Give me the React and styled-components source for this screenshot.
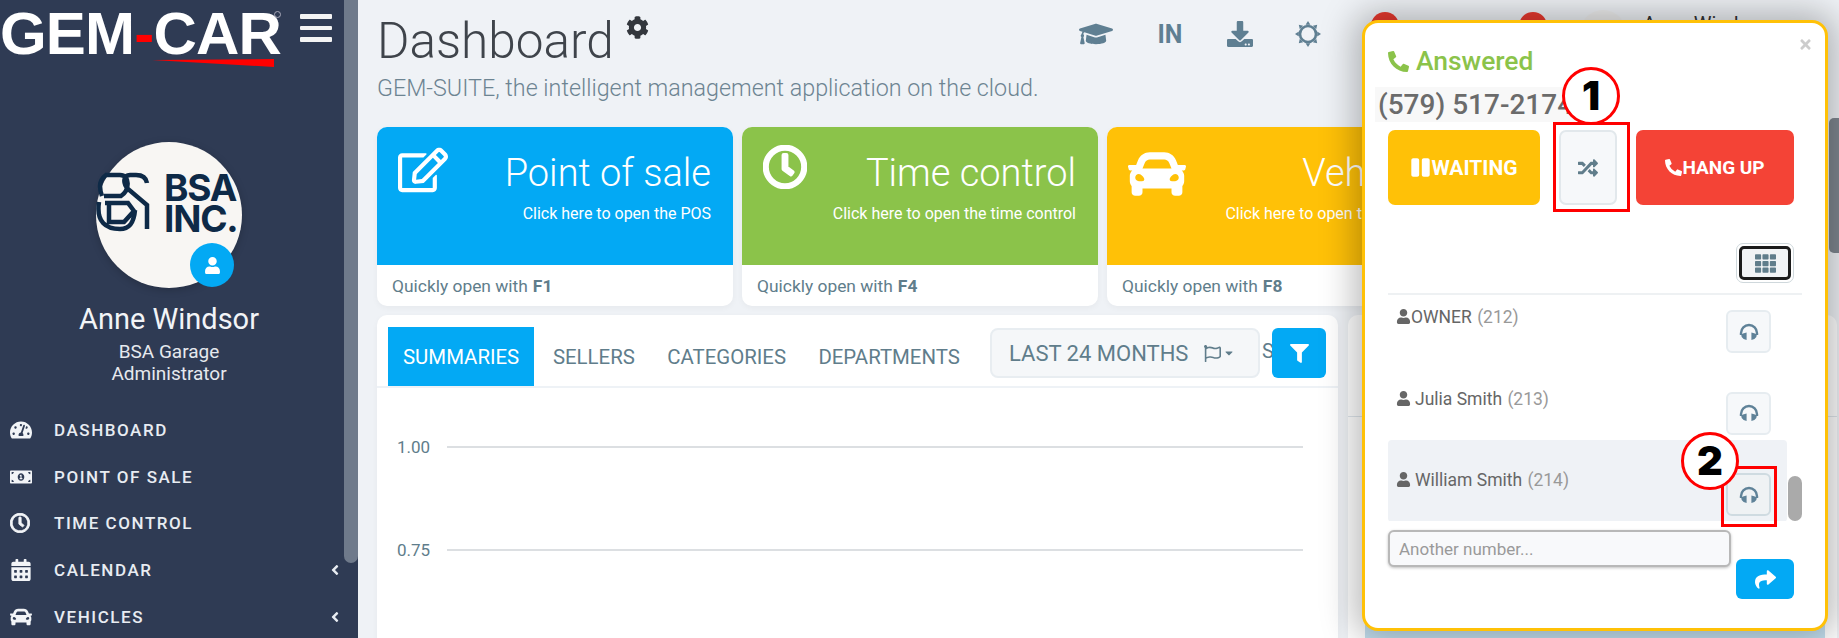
import React from "react";
import styled, { createGlobalStyle } from "styled-components";
import {
  FaTachometerAlt, FaMoneyBillAlt, FaRegClock, FaCalendarAlt, FaCar, FaUser, FaAngleLeft, FaCog,
  FaRegEdit, FaGraduationCap, FaDownload, FaRandom, FaTh, FaShare,
  FaFilter, FaPhoneAlt, FaPause, FaTimes, FaRegFlag, FaCaretDown,
} from "react-icons/fa";

const Global = createGlobalStyle`
  html, body { margin: 0; padding: 0; height: 638px; overflow: hidden; background: #eff2f6; }
  body, input { font-family: Roboto, "Liberation Sans", sans-serif; }
  * { box-sizing: border-box; }
`;

const Page = styled.div`
  position: relative; width: 1839px; height: 638px; overflow: hidden;
  display: flex; background: #eff2f6;
`;

/* Sidebar */
const Sidebar = styled.aside`
  position: relative; width: 358px; height: 638px; flex: none; background: #2f3b54; color: #fff;
  display: flex; flex-direction: column;
`;
const SideThumb = styled.div`
  position: absolute; top: 0; right: 0; width: 14px; height: 563px; background: #6f7a8b;
  border-radius: 0 0 7px 7px;
`;
const Brand = styled.div`
  display: flex; height: 142px; flex: none; align-items: flex-start;
`;
const Logo = styled.div`
  position: relative; width: 300px; height: 70px; padding-top: 3px;
  font: 700 60px/62px "Liberation Sans", Arial, sans-serif; letter-spacing: -.8px; white-space: nowrap;
  color: #fff;
`;
const RedDash = styled.span`color: #f00;`;
const Swoosh = styled.svg`position: absolute; left: 150px; top: 59px;`;
const Reg = styled.span`
  position: absolute; left: 274px; top: 11px; width: 7px; height: 7px; border-radius: 50%; border: 1px solid #aab;
`;
const Burger = styled.div`
  margin: 14px 0 0 0; width: 32px; display: flex; flex-direction: column; gap: 7px;
  & > i { display: block; height: 4.5px; background: #f4f4f4; border-radius: 1px; }
`;
const Profile = styled.div`
  display: flex; flex-direction: column; align-items: center; width: 338px; flex: none;
`;
const Avatar = styled.div`
  position: relative; width: 146px; height: 146px; border-radius: 50%; background: #f8f6f3;
  box-shadow: 0 2px 8px rgba(0,0,0,.2);
`;
const AvatarMark = styled.svg`position: absolute; left: 0; top: 30px;`;
const AvatarText = styled.div`
  position: absolute; left: 68px; top: 30px; color: #0e2a47; font: 700 37px/31px Inter, Roboto, sans-serif; letter-spacing: -1.2px;
`;
const Badge = styled.div`
  position: absolute; left: 94px; top: 101px; width: 44px; height: 44px; border-radius: 50%;
  background: #03a9f4; display: flex; align-items: center; justify-content: center; font-size: 17px; color: #fff;
`;
const Name = styled.div`font-size: 29px; line-height: 32px; margin-top: 15px; color: #f2f4f7;`;
const Role = styled.div`font-size: 19px; line-height: 22px; color: #e6e9ee; margin-top: ${p => p.$mt || 0}px;`;
const Menu = styled.nav`
  margin-top: 22px; display: flex; flex-direction: column;
`;
const MenuItem = styled.div`
  display: flex; align-items: center; height: 46.6px; flex: none; padding-left: 10px;
  color: #e8ecf2; font-size: 17px; font-weight: 500; letter-spacing: 1.55px;
`;
const MenuIcon = styled.span`
  width: 44px; flex: none; display: flex; align-items: center; font-size: 22px; color: #f2f4f7;
`;
const MenuLabel = styled.span`flex: 1;`;
const MenuCaret = styled.span`
  width: 30px; margin-right: 8px; font-size: 16px; display: flex; justify-content: center; color: #e8ecf2;
`;

/* Main */
const Main = styled.main`flex: 1; min-width: 0; padding: 0 0 0 19px; display: flex; flex-direction: column;`;
const Header = styled.header`display: flex; height: 127px; flex: none; align-items: flex-start;`;
const Titles = styled.div`width: 682px; padding-top: 13px;`;
const Title = styled.h1`
  margin: 0; display: flex; align-items: flex-start; font-weight: 300; font-size: 49.5px; line-height: 56px; color: #3f444b;
`;
const TitleGear = styled.span`font-size: 23px; margin: 3px 0 0 12px; line-height: 1; color: #33373d;`;
const Sub = styled.p`margin: 5px 0 0; font-size: 23.3px; line-height: 28px; font-weight: 300; color: #6d8492; white-space: nowrap;`;
const TopIcons = styled.div`
  display: flex; align-items: center; height: 68px; color: #5f7f92;
`;
const TopIcon = styled.span`
  width: ${p => p.$w}px; display: flex; justify-content: center; font-size: ${p => p.$s || 26}px; font-weight: 700;
`;
const Cards = styled.div`display: flex; gap: 9px; width: 1460px; flex: none;`;
const Card = styled.article`
  width: 356px; flex: none; height: 179px; border-radius: 10px; overflow: hidden; background: #fff;
  box-shadow: 0 2px 6px rgba(0,0,0,.04);
`;
const CardTop = styled.div`
  height: 138px; background: ${p => p.$c}; color: #fff; display: flex; justify-content: space-between; padding: 18px 22px 0 21px;
`;
const CardIcon = styled.div`font-size: ${p => p.$s || 46}px; line-height: 1; width: 60px; height: 46px;`;
const CardText = styled.div`text-align: right; white-space: nowrap;`;
const CardTitle = styled.div`font-size: 38px; font-weight: 300; line-height: 44px; margin-top: 6px;`;
const CardDesc = styled.div`font-size: 16px; line-height: 20px; margin-top: 9px; font-weight: 400;`;
const CardFoot = styled.div`height: 41px; padding: 0 15px; display: flex; align-items: center; font-size: 17.4px; color: #607d8b; & b{margin-left:5px}`;
const ThickClock = styled(FaRegClock)`stroke: currentColor; stroke-width: 24px;`;

const Panels = styled.div`display: flex; gap: 10px; margin-top: 9px; width: 1460px; flex: none;`;
const Panel = styled.section`
  width: 961px; height: 400px; flex: none; background: #fff; border-radius: 10px 10px 0 0; box-shadow: 0 2px 6px rgba(0,0,0,.04); position: relative;
`;
const SidePanel = styled.section`flex: 1; height: 400px; background: #fff; border-radius: 10px 10px 0 0; & > div { height: 102px; border-bottom: 1px solid #dfe6ec; }`;
const TabBar = styled.div`
  position: relative; height: 73px; padding: 12px 11px 0; border-bottom: 2px solid #eef2f6; display: flex; align-items: stretch;
`;
const Tab = styled.div`
  padding: 0 ${p => (p.$active ? 15 : 16.2)}px; display: flex; align-items: center; font-size: 20.4px; margin-right: ${p => p.$gap || 0}px;
  color: ${p => (p.$active ? "#fff" : "#607d8b")}; background: ${p => (p.$active ? "#03a9f4" : "transparent")};
`;
const Period = styled.div`
  position: absolute; left: 613px; top: 13px; width: 270px; height: 50px; background: #f5f7f9; border: 2px solid #e8edf1; border-radius: 8px;
  display: flex; align-items: center; padding: 0 17px; font-size: 22px; color: #607d8b; white-space: nowrap;
`;
const PeriodIcons = styled.span`margin-left: 16px; display: flex; align-items: center; font-size: 17px; color: #607d8b; & svg + svg { font-size: 12px; margin-left: 2px; }`;
const Cut = styled.span`position: absolute; left: 885px; top: 24px; color: #607d8b; font-size: 20px;`;
const FilterBtn = styled.div`
  position: absolute; left: 895px; top: 13px; width: 54px; height: 50px; border-radius: 6px; background: #03a9f4; color: #fff;
  display: flex; align-items: center; justify-content: center; font-size: 19px;
`;
const Chart = styled.div`padding: 49px 35px 0 20px; display: flex; flex-direction: column; gap: 83px;`;
const ChartRow = styled.div`display: flex; align-items: center; gap: 17px; font-size: 17px; color: #607d8b; & > i { flex: 1; height: 2px; background: #dcdfe2; }`;

const PageThumb = styled.div`position: absolute; right: 0; top: 118px; width: 10px; height: 135px; background: #7f8790; border-radius: 5px 0 0 5px;`;
const BehindTop = styled.div`
  position: absolute; left: 1370px; top: 12px; width: 460px; height: 10px;
`;
const RedDot = styled.i`position: absolute; top: 0; left: ${p => p.$x}px; width: 28px; height: 28px; border-radius: 50%; background: #e8392f;`;
const GreyDot = styled.i`position: absolute; top: -2px; left: 210px; width: 46px; height: 46px; border-radius: 50%; background: #eee;`;
const BehindName = styled.span`position: absolute; left: 273px; top: 0; font-size: 20px; color: #333; white-space: nowrap;`;
const BehindChart = styled.div`position: absolute; left: 1365px; top: 622px; width: 460px; height: 16px; background: #c4e0f0;`;

/* Call popup */
const Popup = styled.div`
  position: absolute; left: 1362px; top: 20px; width: 466px; height: 611px; background: #fff; border: 3px solid #ffc107; border-radius: 16px;
  box-shadow: 0 0 34px 8px rgba(0,0,0,.27); padding: 0 23px; display: flex; flex-direction: column;
`;
const Close = styled.span`position: absolute; right: 12px; top: 14px; color: #ccc; font-size: 15px;`;
const Status = styled.div`
  margin-top: 23px; height: 30px; flex: none; display: flex; align-items: center; gap: 7px; color: #8bc34a; font-size: 26.4px; font-weight: 500;
  & svg { font-size: 21px; }
`;
const Phone = styled.div`
  margin: 11px 0 0 -13px; height: 35px; flex: none; width: 200px; white-space: nowrap; font-size: 28px; font-weight: 500; line-height: 35px; color: #6b6b6b; background: #f8f8f8; padding-left: 3px;
`;
const Actions = styled.div`display: flex; gap: 19px; margin-top: 8px; flex: none;`;
const ActionBtn = styled.div`
  width: ${p => p.$w}px; height: 75px; border-radius: 7px; flex: none; display: flex; align-items: center; justify-content: center;
  background: ${p => p.$bg}; color: ${p => p.$fg || "#fff"}; border: ${p => p.$line ? `2px solid ${p.$line}` : 0}; font-size: ${p => p.$f || 19}px; font-weight: 700; white-space: nowrap;
  & svg { font-size: ${p => p.$i || 21}px; }
`;
const Keypad = styled.div`
  margin: 38px 8px 0 auto; width: 58px; height: 40px; flex: none; border: 1px solid #cfd8dc; border-radius: 7px; padding: 2px;
  & > div { height: 100%; border: 3px solid #1b1b1b; border-radius: 5px; background: #f1f3f5; display: flex; align-items: center; justify-content: center; color: #607d8b; font-size: 21px; }
`;
const Extensions = styled.div`
  position: relative; flex: none; height: 228px; margin: 10px 0 0; border-top: 2px solid #eef1f3; overflow: hidden;
`;
const ExtensionScroll = styled.div`display: flex; flex-direction: column; margin-top: -18px;`;
const Extension = styled.div`
  width: 399px; height: 81.5px; flex: none; padding: 0 16px 0 8px; display: flex; justify-content: space-between; align-items: flex-start; font-size: 17.5px; color: #666; border-radius: 4px;
  background: ${p => (p.$active ? "#eff2f6" : "transparent")};
`;
const ExtName = styled.span`
  display: block; line-height: 20px; margin-top: 30px; white-space: nowrap;
  & svg { font-size: 15px; color: #666; margin-right: ${p => p.$tight ? 0 : 4}px; vertical-align: -1px; } & em { font-style: normal; color: #999; margin-left: 1px; }
`;
const Listen = styled.div`
  width: 45px; height: 43px; flex: none; margin-top: 33px; border-radius: 6px; border: 2px solid ${p => p.$on ? "#cfdbe1" : "#e6ecf0"}; background: ${p => p.$on ? "#eff2f4" : "#f6f8fa"};
  display: flex; align-items: center; justify-content: center; color: #5f8298;
`;
const ListThumb = styled.div`position: absolute; right: 0; bottom: 0; width: 14px; height: 45px; background: #aaa; border-radius: 7px;`;
const Other = styled.div`display: flex; gap: 5px; margin-top: 9px; align-items: flex-start; flex: none;`;
const Input = styled.input`
  width: 343px; height: 37px; border: 2px solid #b8b8b8; border-radius: 6px; background: #f8f9fb; padding: 0 9px; font-size: 17px; box-shadow: 0 1px 3px rgba(0,0,0,.25); outline: none;
  &::placeholder { color: #9a9a9a; opacity: 1; }
`;
const Send = styled.div`
  width: 58px; height: 40px; margin-top: 29px; background: #03a9f4; color: #fff; border-radius: 6px; display: flex; align-items: center; justify-content: center; font-size: 21px;
`;
const RedBox = styled.div`
  position: absolute; left: ${p => p.$x}px; top: ${p => p.$y}px; width: ${p => p.$w}px; height: ${p => p.$h}px; border: 3px solid #f00; pointer-events: none;
`;
const Marker = styled.div`
  position: absolute; left: ${p => p.$x}px; top: ${p => p.$y}px; width: 58px; height: 58px; border-radius: 50%; border: 3px solid #f00; background: #fff; color: #000;
  display: flex; align-items: center; justify-content: center; font: 900 40px/1 Inter, "Liberation Sans", sans-serif;
`;

const SunRing = () => (
  <svg width="26" height="26" viewBox="0 0 26 26" fill="currentColor">
    <circle cx="13" cy="13" r="8" fill="none" stroke="currentColor" strokeWidth="2.6" />
    {[0, 45, 90, 135, 180, 225, 270, 315].map((a) => (
      <path key={a} d="M10.6 3.8 L13 0 L15.4 3.8 Z" transform={`rotate(${a} 13 13)`} />
    ))}
  </svg>
);
const Headset = () => (
  <svg width="20" height="18" viewBox="0 0 20 18" fill="currentColor">
    <path d="M2 12 V10 A8 8 0 0 1 18 10 V12" fill="none" stroke="currentColor" strokeWidth="2.4" />
    <path d="M4 10.5 L7.6 9.6 V17 L4.6 16 Q2 14.5 2.2 11.5 Z M16 10.5 L12.4 9.6 V17 L15.4 16 Q18 14.5 17.8 11.5 Z" />
  </svg>
);

const cards = [
  { c: "#03a9f4", t: "Point of sale", d: "Click here to open the POS", k: "F1", i: <FaRegEdit />, s: 50 },
  { c: "#8bc34a", t: "Time control", d: "Click here to open the time control", k: "F4", i: <ThickClock />, s: 44 },
  { c: "#ffc107", t: "Vehicles", d: "Click here to open the vehicles", k: "F8", i: <FaCar />, s: 58 },
];
const menu = [
  ["DASHBOARD", <FaTachometerAlt />], ["POINT OF SALE", <FaMoneyBillAlt />], ["TIME CONTROL", <ThickClock size={20} />],
  ["CALENDAR", <FaCalendarAlt />, true], ["VEHICLES", <FaCar />, true],
];

export default function App() {
  return (
    <Page>
      <Global />
      <Sidebar>
        <SideThumb />
        <Brand>
          <Logo>
            GEM<RedDash>-</RedDash>CAR
            <Swoosh width="125" height="10" viewBox="0 0 125 10"><path d="M2 1 L124 0 L124 8 Z" fill="#f00" /></Swoosh>
            <Reg />
          </Logo>
          <Burger><i /><i /><i /></Burger>
        </Brand>
        <Profile>
          <Avatar>
            <AvatarMark width="54" height="60" viewBox="0 0 54 60" fill="none" stroke="#0e2a47" strokeWidth="4.5">
              <path d="M9 3 H24 C34 3 34 18 25 24 H8 M10 3 C3 8 3 16 6 24 M51 11 C50 5 46 3 40 3 H34 C28 3 26 10 32 17 L51 33 V57 M9 31 H32 L38 39 L28 50 H13 V31 M3 30 C0 50 10 57 24 57 C34 57 38 50 39 38" />
            </AvatarMark>
            <AvatarText>BSA<br />INC.</AvatarText>
            <Badge><FaUser /></Badge>
          </Avatar>
          <Name>Anne Windsor</Name>
          <Role $mt={6}>BSA Garage</Role>
          <Role>Administrator</Role>
        </Profile>
        <Menu>
          {menu.map(([label, icon, sub]) => (
            <MenuItem key={label}>
              <MenuIcon>{icon}</MenuIcon>
              <MenuLabel>{label}</MenuLabel>
              {sub && <MenuCaret><FaAngleLeft /></MenuCaret>}
            </MenuItem>
          ))}
        </Menu>
      </Sidebar>

      <Main>
        <Header>
          <Titles>
            <Title>Dashboard<TitleGear><FaCog /></TitleGear></Title>
            <Sub>GEM-SUITE, the intelligent management application on the cloud.</Sub>
          </Titles>
          <TopIcons>
            <TopIcon $w={74} $s={34}><FaGraduationCap /></TopIcon>
            <TopIcon $w={74} $s={25}>IN</TopIcon>
            <TopIcon $w={66} $s={26}><FaDownload /></TopIcon>
            <TopIcon $w={70}><SunRing /></TopIcon>
          </TopIcons>
        </Header>
        <Cards>
          {cards.map((x) => (
            <Card key={x.k}>
              <CardTop $c={x.c}>
                <CardIcon $s={x.s}>{x.i}</CardIcon>
                <CardText>
                  <CardTitle>{x.t}</CardTitle>
                  <CardDesc>{x.d}</CardDesc>
                </CardText>
              </CardTop>
              <CardFoot>Quickly open with <b>{x.k}</b></CardFoot>
            </Card>
          ))}
        </Cards>
        <Panels>
          <Panel>
            <TabBar>
              <Tab $active $gap={2.5}>SUMMARIES</Tab>
              <Tab>SELLERS</Tab>
              <Tab>CATEGORIES</Tab>
              <Tab>DEPARTMENTS</Tab>
              <Period>LAST 24 MONTHS<PeriodIcons><FaRegFlag /><FaCaretDown /></PeriodIcons></Period>
              <Cut>S</Cut>
              <FilterBtn><FaFilter /></FilterBtn>
            </TabBar>
            <Chart>
              <ChartRow>1.00<i /></ChartRow>
              <ChartRow>0.75<i /></ChartRow>
            </Chart>
          </Panel>
          <SidePanel><div /></SidePanel>
        </Panels>
      </Main>

      <BehindTop>
        <RedDot $x={1} /><RedDot $x={149} /><GreyDot /><BehindName>Anne Windsor</BehindName>
      </BehindTop>
      <BehindChart />
      <PageThumb />

      <Popup>
        <Close><FaTimes /></Close>
        <Status><FaPhoneAlt />Answered</Status>
        <Phone>(579) 517-2174</Phone>
        <Actions>
          <ActionBtn $w={152} $f={21} $bg="#ffc107"><FaPause />WAITING</ActionBtn>
          <ActionBtn $w={58} $bg="#f6f8fa" $fg="#607d8b" $line="#e2e8ec" $i={20}><FaRandom /></ActionBtn>
          <ActionBtn $w={158} $bg="#f44336" $i={17}><FaPhoneAlt />HANG UP</ActionBtn>
        </Actions>
        <Keypad><div><FaTh /></div></Keypad>
        <Extensions>
          <ExtensionScroll>
            <Extension>
              <ExtName $tight><FaUser />OWNER <em>(212)</em></ExtName>
              <Listen><Headset /></Listen>
            </Extension>
            <Extension>
              <ExtName><FaUser />Julia Smith <em>(213)</em></ExtName>
              <Listen><Headset /></Listen>
            </Extension>
            <Extension $active>
              <ExtName><FaUser />William Smith <em>(214)</em></ExtName>
              <Listen $on><Headset /></Listen>
            </Extension>
          </ExtensionScroll>
          <ListThumb />
        </Extensions>
        <Other>
          <Input placeholder="Another number..." />
          <Send><FaShare /></Send>
        </Other>
        <RedBox $x={188} $y={99} $w={77} $h={90} />
        <Marker $x={197} $y={44}>1</Marker>
        <RedBox $x={356} $y={443} $w={56} $h={61} />
        <Marker $x={316} $y={409}>2</Marker>
      </Popup>
    </Page>
  );
}
